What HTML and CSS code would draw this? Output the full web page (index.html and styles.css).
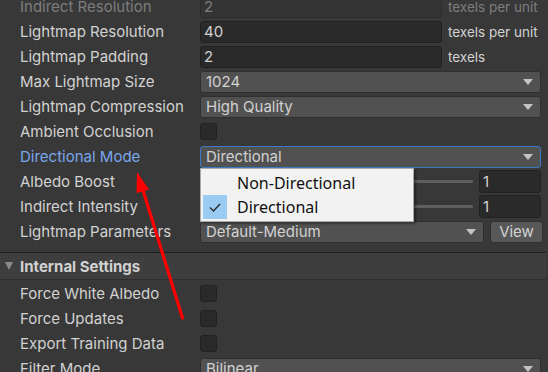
FILE: index.html
```html
<!DOCTYPE html>
<html>
<head>
<meta charset="utf-8">
<link rel="stylesheet" href="styles.css">
</head>
<body>
<div class="inspector">
  <div class="section first">
    <div class="row disabled">
      <div class="label">Indirect Resolution</div>
      <div class="field"><div class="text-field">2</div><span class="unit">texels per unit</span></div>
    </div>
    <div class="row">
      <div class="label">Lightmap Resolution</div>
      <div class="field"><div class="text-field">40</div><span class="unit">texels per unit</span></div>
    </div>
    <div class="row">
      <div class="label">Lightmap Padding</div>
      <div class="field"><div class="text-field">2</div><span class="unit">texels</span></div>
    </div>
    <div class="row">
      <div class="label">Max Lightmap Size</div>
      <div class="field"><div class="dropdown"><span>1024</span><span class="caret"></span></div></div>
    </div>
    <div class="row">
      <div class="label">Lightmap Compression</div>
      <div class="field"><div class="dropdown"><span>High Quality</span><span class="caret"></span></div></div>
    </div>
    <div class="row">
      <div class="label">Ambient Occlusion</div>
      <div class="field"><div class="checkbox"></div></div>
    </div>
    <div class="row">
      <div class="label focused">Directional Mode</div>
      <div class="field"><div class="dropdown active"><span>Directional</span><span class="caret"></span></div></div>
    </div>
    <div class="row">
      <div class="label">Albedo Boost</div>
      <div class="field"><div class="slider"><div class="track"></div></div><div class="num-field">1</div></div>
    </div>
    <div class="row">
      <div class="label">Indirect Intensity</div>
      <div class="field"><div class="slider"><div class="track"></div></div><div class="num-field">1</div></div>
    </div>
    <div class="row">
      <div class="label">Lightmap Parameters</div>
      <div class="field"><div class="dropdown grow"><span>Default-Medium</span><span class="caret"></span></div><div class="button">View</div></div>
    </div>
  </div>

  <div class="header">
    <span class="foldout"></span>
    <span class="header-title">Internal Settings</span>
  </div>

  <div class="section">
    <div class="row">
      <div class="label">Force White Albedo</div>
      <div class="field"><div class="checkbox"></div></div>
    </div>
    <div class="row">
      <div class="label">Force Updates</div>
      <div class="field"><div class="checkbox"></div></div>
    </div>
    <div class="row">
      <div class="label">Export Training Data</div>
      <div class="field"><div class="checkbox"></div></div>
    </div>
    <div class="row">
      <div class="label">Filter Mode</div>
      <div class="field"><div class="dropdown"><span>Bilinear</span><span class="caret"></span></div></div>
    </div>
  </div>

  <div class="popup">
    <div class="popup-item"><span class="check-slot"></span><span>Non-Directional</span></div>
    <div class="popup-item"><span class="check-slot checked"><svg width="24" height="24" viewBox="0 0 24 24"><path d="M7 12.5 L10.5 16 L17 9" fill="none" stroke="#2b2b2b" stroke-width="1.4"/></svg></span><span>Directional</span></div>
  </div>

  <svg class="annotation" width="548" height="372" viewBox="0 0 548 372">
    <line x1="182.5" y1="318" x2="142" y2="187" stroke="#ff0000" stroke-width="3.2" stroke-linecap="round"/>
    <polygon points="137,172 149,189.5 136.5,193" fill="#ff0000"/>
  </svg>
</div>
</body>
</html>
```

FILE: styles.css
```css
* { box-sizing: border-box; }
html, body {
  margin: 0;
  padding: 0;
  background: #383838;
  overflow: hidden;
}
body {
  width: 548px;
  height: 372px;
  font-family: Inter, "Noto Sans", sans-serif;
  font-size: 15px;
  color: #d2d2d2;
}
.inspector {
  position: relative;
  display: flow-root;
  width: 548px;
  height: 372px;
}
.section.first {
  margin-top: -6px;
}
.row {
  display: flex;
  align-items: center;
  height: 25px;
}
.label {
  flex: 0 0 200px;
  width: 200px;
  padding-left: 20px;
  white-space: nowrap;
  color: #d2d2d2;
  line-height: 25px;
}
.row.disabled .label,
.row.disabled .text-field,
.row.disabled .unit {
  color: #7d7d7d;
}
.label.focused { color: #7aa7ec; }
.field {
  flex: 1;
  min-width: 0;
  display: flex;
  align-items: center;
  padding-right: 7px;
  gap: 6px;
}
.text-field {
  flex: 0 0 242px;
  height: 22px;
  background: #2a2a2a;
  border: 1px solid #212121;
  border-radius: 3px;
  padding-left: 3px;
  line-height: 20px;
  color: #d2d2d2;
}
.row.disabled .text-field {
  background: #343434;
  border-color: #2c2c2c;
}
.unit {
  color: #d2d2d2;
  white-space: nowrap;
  font-size: 13.5px;
}
.dropdown {
  flex: 1;
  height: 22px;
  background: #515151;
  border: 1px solid #2f2f2f;
  border-radius: 3px;
  display: flex;
  align-items: center;
  justify-content: space-between;
  padding: 0 7px 0 5px;
  color: #d2d2d2;
}
.dropdown.active {
  border-color: #3a7ac4;
}
.caret {
  width: 0;
  height: 0;
  border-left: 5px solid transparent;
  border-right: 5px solid transparent;
  border-top: 6px solid #c4c4c4;
}
.checkbox {
  width: 17px;
  height: 17px;
  background: #2a2a2a;
  border: 1px solid #212121;
  border-radius: 3px;
}
.slider {
  flex: 1;
  height: 22px;
  display: flex;
  align-items: center;
  padding-left: 6px;
}
.track {
  flex: 1;
  height: 3px;
  background: #5e5e5e;
  border-radius: 1px;
}
.num-field {
  flex: 0 0 62px;
  height: 23px;
  background: #2a2a2a;
  border: 1px solid #212121;
  border-radius: 3px;
  padding-left: 3px;
  line-height: 21px;
}
.button {
  flex: 0 0 53px;
  height: 22px;
  background: #585858;
  border: 1px solid #303030;
  border-radius: 3px;
  text-align: center;
  line-height: 20px;
  color: #d2d2d2;
  margin-right: -2px;
}
.header {
  margin-top: 8px;
  margin-bottom: 1px;
  height: 28px;
  background: #3e3e3e;
  border-top: 1px solid #1f1f1f;
  border-bottom: 1px solid #2f2f2f;
  display: flex;
  align-items: center;
  padding-left: 5px;
  margin-right: 2px;
}
.foldout {
  width: 0;
  height: 0;
  border-left: 4.5px solid transparent;
  border-right: 4.5px solid transparent;
  border-top: 8px solid #8a8a8a;
  margin-right: 7px;
}
.header-title {
  font-weight: 700;
  color: #d2d2d2;
}
.popup {
  position: absolute;
  left: 200px;
  top: 168px;
  width: 214px;
  height: 54px;
  background: #f2f2f2;
  border: 1px solid #a9a9a9;
  box-shadow: 2px 2px 2px rgba(0,0,0,0.35);
  padding-top: 2px;
  font-family: "Noto Sans", "Open Sans", sans-serif;
  font-size: 16px;
  color: #101010;
}
.popup-item {
  display: flex;
  align-items: center;
  height: 24px;
  padding-left: 2px;
}
.check-slot {
  width: 24px;
  height: 24px;
  margin-right: 10px;
  display: flex;
}
.check-slot.checked {
  background: #99cbf3;
}
.annotation {
  position: absolute;
  left: 0;
  top: 0;
  pointer-events: none;
}
```
